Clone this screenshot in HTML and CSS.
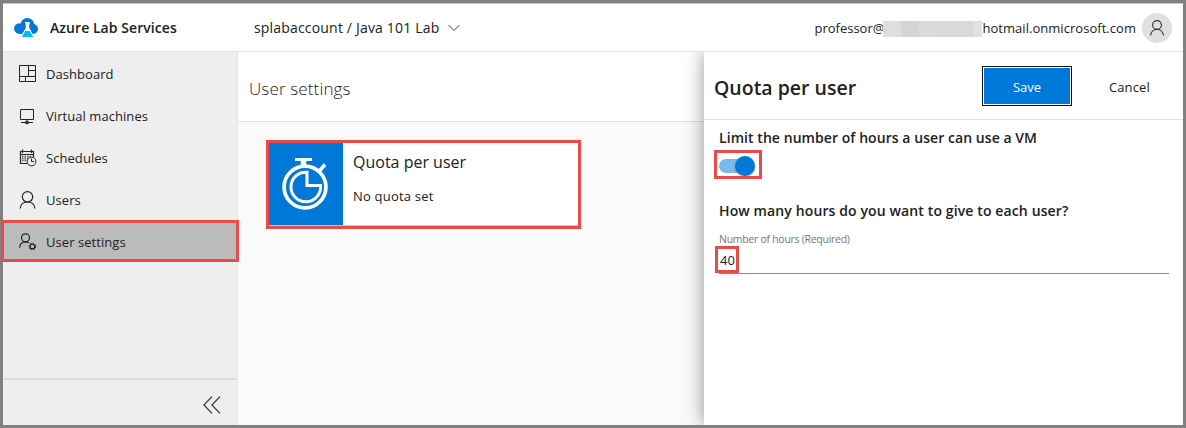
FILE: index.html
```html
<!DOCTYPE html>
<html lang="en">
<head>
<meta charset="utf-8">
<title>Azure Lab Services</title>
<link rel="stylesheet" href="styles.css">
</head>
<body>
<div class="app">
  <header class="topbar">
    <svg class="logo" width="24" height="20" viewBox="0 0 24 20">
      <circle cx="5.400" cy="10.500" r="5.300" fill="#0078d7"/><circle cx="13.300" cy="7" r="6.900" fill="#0078d7"/><circle cx="19" cy="11" r="5" fill="#0078d7"/><path d="M5 9H19V16H5Z" fill="#0078d7"/>
      <path d="M11 4H16V5.500H15.300V10L21 20H6L11.700 10V5.500H11Z" fill="#fff"/>
      <path d="M11.300 13H15.700L19.200 19H7.800Z" fill="#00bcf2"/>
    </svg>
    <span class="brand">Azure Lab Services</span>
    <span class="crumb">splabaccount / Java 101 Lab</span>
    <svg class="caret" width="12" height="8" viewBox="0 0 12 8"><path d="M.5 1L6 6.500L11.500 1" fill="none" stroke="#444" stroke-width="1"/></svg>
    <div class="account">
      <span class="mail-name">professor@</span>
      <span class="redacted"></span>
      <span class="mail-host">hotmail.onmicrosoft.com</span>
      <span class="avatar"><svg width="14" height="16" viewBox="0 0 14 16"><g fill="none" stroke="#333" stroke-width="1.100"><circle cx="7" cy="5" r="4.400"/><path d="M.6 15.500C.8 11.800 3.500 9.400 7 9.400S13.200 11.800 13.400 15.500"/></g></svg></span>
    </div>
  </header>
  <div class="body">
    <nav class="sidebar">
      <a class="item"><svg class="icon" width="18" height="18" viewBox="0 0 18 18"><path d="M.5 .5H16.500V16.500H.5ZM9.500 .5V11.500M.5 11.500H16.500M9.500 5.500H16.500M6.500 11.500V16.500" fill="none" stroke="#222"/></svg><span>Dashboard</span></a>
      <a class="item"><svg class="icon" width="18" height="18" viewBox="0 0 18 18"><path d="M1.500 2.500H14.500V12.500H1.500ZM8 12.500V15M2 15.500H14M5.500 15.500L8 14L10.500 15.500L8 17Z" fill="none" stroke="#222"/></svg><span>Virtual machines</span></a>
      <a class="item"><svg class="icon" width="18" height="18" viewBox="0 0 18 18"><path d="M8.500 14.500H1.500V2.500H14.500V8M1.500 5.500H14.500M3.500 .5V4M12.500 .5V4" fill="none" stroke="#222" stroke-width="1.200"/><path d="M3 7.500H12M3 9.500H10M3 11.500H9" stroke="#555" stroke-width="1.300" stroke-dasharray="1.500 1"/><circle cx="12.500" cy="12.500" r="4.400" fill="#eee" stroke="#222"/><path d="M12.500 9.500V12.500H15" fill="none" stroke="#222"/></svg><span>Schedules</span></a>
      <a class="item"><svg class="icon" width="18" height="18" viewBox="0 0 18 18"><g fill="none" stroke="#222" stroke-width="1.200"><circle cx="8.500" cy="5.800" r="5.200"/><path d="M1.100 17.500C1.500 13.500 4.500 11 8.500 11S15.500 13.500 15.900 17.500"/></g></svg><span>Users</span></a>
      <a class="item selected"><svg class="icon" width="18" height="18" viewBox="0 0 18 18"><g fill="none" stroke="#222" stroke-width="1.150"><circle cx="6.500" cy="4.800" r="4"/><path d="M.6 14.800C.9 11.200 3.300 8.900 6.700 8.900C7.900 8.900 9 9.200 10 9.800"/></g><circle cx="13.400" cy="13.500" r="2.300" fill="none" stroke="#222" stroke-width="1.100"/><circle cx="13.400" cy="13.500" r="3.200" fill="none" stroke="#222" stroke-width="1.300" stroke-dasharray="1.200 1.313"/></svg><span>User settings</span></a>
      <div class="collapse"><svg width="18" height="18" viewBox="0 0 18 18"><path d="M9 .7L.9 9L9 17.300M17 .7L8.900 9L17 17.300" fill="none" stroke="#333" stroke-width="1.200"/></svg></div>
    </nav>
    <main class="main">
      <h1 class="page-title"><span>User settings</span></h1>
      <section class="card">
        <div class="tile"><svg width="46" height="54" viewBox="0 0 46 54">
          <g fill="none" stroke="#fff"><circle cx="23" cy="30" r="20.900" stroke-width="3.700"/><path d="M13 2.500H30" stroke-width="3"/><path d="M21.500 2V9" stroke-width="5.500"/><path d="M37 14.500L43 7.500" stroke-width="3.500"/><path d="M25 15.200V28.500H38.500A14.800 14.800 0 1 1 25 15.200Z" stroke-width="3"/></g>
        </svg></div>
        <div class="card-text"><div class="card-title">Quota per user</div><div class="card-sub">No quota set</div></div>
      </section>
    </main>
    <aside class="panel">
      <div class="panel-head">
        <h2 class="panel-title">Quota per user</h2>
        <button class="save"><span>Save</span></button>
        <button class="cancel">Cancel</button>
      </div>
      <div class="form">
        <div class="question q1">Limit the number of hours a user can use a VM</div>
        <div class="toggle"><span class="knob"></span></div>
        <div class="question q2">How many hours do you want to give to each user?</div>
        <label class="field-label">Number of hours (Required)</label>
        <div class="field">40</div>
      </div>
    </aside>
  </div>
</div>
<div class="mark mark-nav"></div>
<div class="mark mark-card"></div>
<div class="mark mark-toggle"></div>
<div class="mark mark-value"></div>
</body>
</html>
```
FILE: styles.css
```css
* { box-sizing: border-box; }
body { margin: 0; font-family: "Open Sans", "Noto Sans", sans-serif; font-size: 13px; color: #212121; background: #fff; }
h1, h2 { margin: 0; }
span, h1, h2 { white-space: nowrap; }
svg { display: block; flex: none; }
.app { width: 1186px; height: 428px; border: 3px solid #808080; display: flex; flex-direction: column; overflow: hidden; }
.topbar { height: 49px; flex: none; display: flex; align-items: center; border-top: 1px solid #ccc; border-bottom: 1px solid #dfdfdf; padding: 0 11px 0 11px; background: #fff; }
.logo { margin-right: 12px; }
.brand { width: 204px; font-size: 14px; font-weight: 600; letter-spacing: .06px; }
.crumb { width: 194px; font-size: 14px; letter-spacing: .18px; }
.account { margin-left: auto; display: flex; align-items: center; }
.mail-name, .mail-host { padding-top: 1px; }
.redacted { width: 99px; height: 16px; margin: 2px 0 0 -1px; background: linear-gradient(90deg, #dedede 0 18px, #d4d4d7 18px 36px, #dadadc 36px 54px, #dad9d5 54px 72px, #d9d9d9 72px 90px, #e1e1e1 90px); }
.mail-host { letter-spacing: .04px; }
.avatar { width: 30px; height: 30px; margin-left: 6px; border-radius: 50%; background: #e0e0e0; display: flex; align-items: center; justify-content: center; }
.body { flex: 1; display: flex; min-height: 0; }
.sidebar { width: 235px; flex: none; background: #eee; border-right: 1px solid #e6e6e6; display: flex; flex-direction: column; padding-top: 1px; }
.item { height: 42px; flex: none; display: flex; align-items: center; padding-left: 16px; gap: 9px; letter-spacing: .06px; }
.selected { height: 40px; padding-top: 2px; background: #bbb; }
.collapse { margin-top: auto; height: 47px; border-top: 2px solid #ddd; display: flex; align-items: center; justify-content: flex-end; padding: 5px 16px 0 0; }
.main { width: 466px; flex: none; background: #fafafa; }
.page-title { height: 70px; padding: 0 0 0 11px; background: #fff; border-bottom: 1px solid #dfdfdf; display: flex; align-items: center; font-size: 17px; font-weight: 300; letter-spacing: .14px; padding-top: 4px; }
.card { width: 310px; height: 82px; margin: 21px 0 0 31px; background: #fff; display: flex; box-shadow: 0 1px 2px #aaa; }
.tile { width: 74px; background: #0078d7; display: flex; align-items: center; justify-content: center; padding-right: 2px; }
.card-text { padding: 8px 0 0 10px; }
.card-title { font-size: 16px; line-height: 22px; white-space: nowrap; }
.card-sub { margin-top: 13px; line-height: 20px; letter-spacing: .2px; }
.panel { flex: 1; background: #fff; box-shadow: 0 0 18px rgba(0,0,0,.42); clip-path: inset(0 0 0 -30px); }
.panel-head { height: 68px; display: flex; align-items: center; border-bottom: 1px solid #dfdfdf; }
.panel-title { width: 278px; padding-left: 10px; font-size: 19.5px; font-weight: 600; margin-top: 3px; }
button { font: inherit; color: inherit; padding: 0; background: none; border: 0; }
.save { width: 90px; height: 40px; border: 1px solid #111; padding: 1px; }
.save span { height: 36px; display: flex; align-items: center; justify-content: center; padding-top: 2px; background: #0078d7; color: #fff; }
.cancel { margin-left: 37px; margin-top: 2px; letter-spacing: .1px; }
.form { padding: 8px 14px 0 15px; }
.question { font-size: 14px; font-weight: 600; line-height: 20px; white-space: nowrap; letter-spacing: .06px; }
.q2 { letter-spacing: .12px; }
.toggle { width: 35px; height: 14px; margin: 11px 0 28px; border-radius: 7px; background: #7db9e9; display: flex; align-items: center; justify-content: flex-end; }
.knob { width: 20px; height: 20px; margin-right: -1px; flex: none; border-radius: 50%; background: #0078d7; box-shadow: 0 1px 2px rgba(0,0,0,.3); }
.field-label { display: block; margin-top: 10px; height: 16px; line-height: 16px; font-size: 10.5px; letter-spacing: -.28px; color: #777; }
.field { height: 27px; line-height: 27px; border-bottom: 1px solid #8a8a8a; padding-left: 1px; }
.mark { position: absolute; border: 3px solid #e94b47; }
.mark-nav { left: 1px; top: 220px; width: 238px; height: 42px; }
.mark-card { left: 266px; top: 140px; width: 315px; height: 89px; }
.mark-toggle { left: 714px; top: 150px; width: 48px; height: 29px; }
.mark-value { left: 715px; top: 246px; width: 24px; height: 27px; }
```
